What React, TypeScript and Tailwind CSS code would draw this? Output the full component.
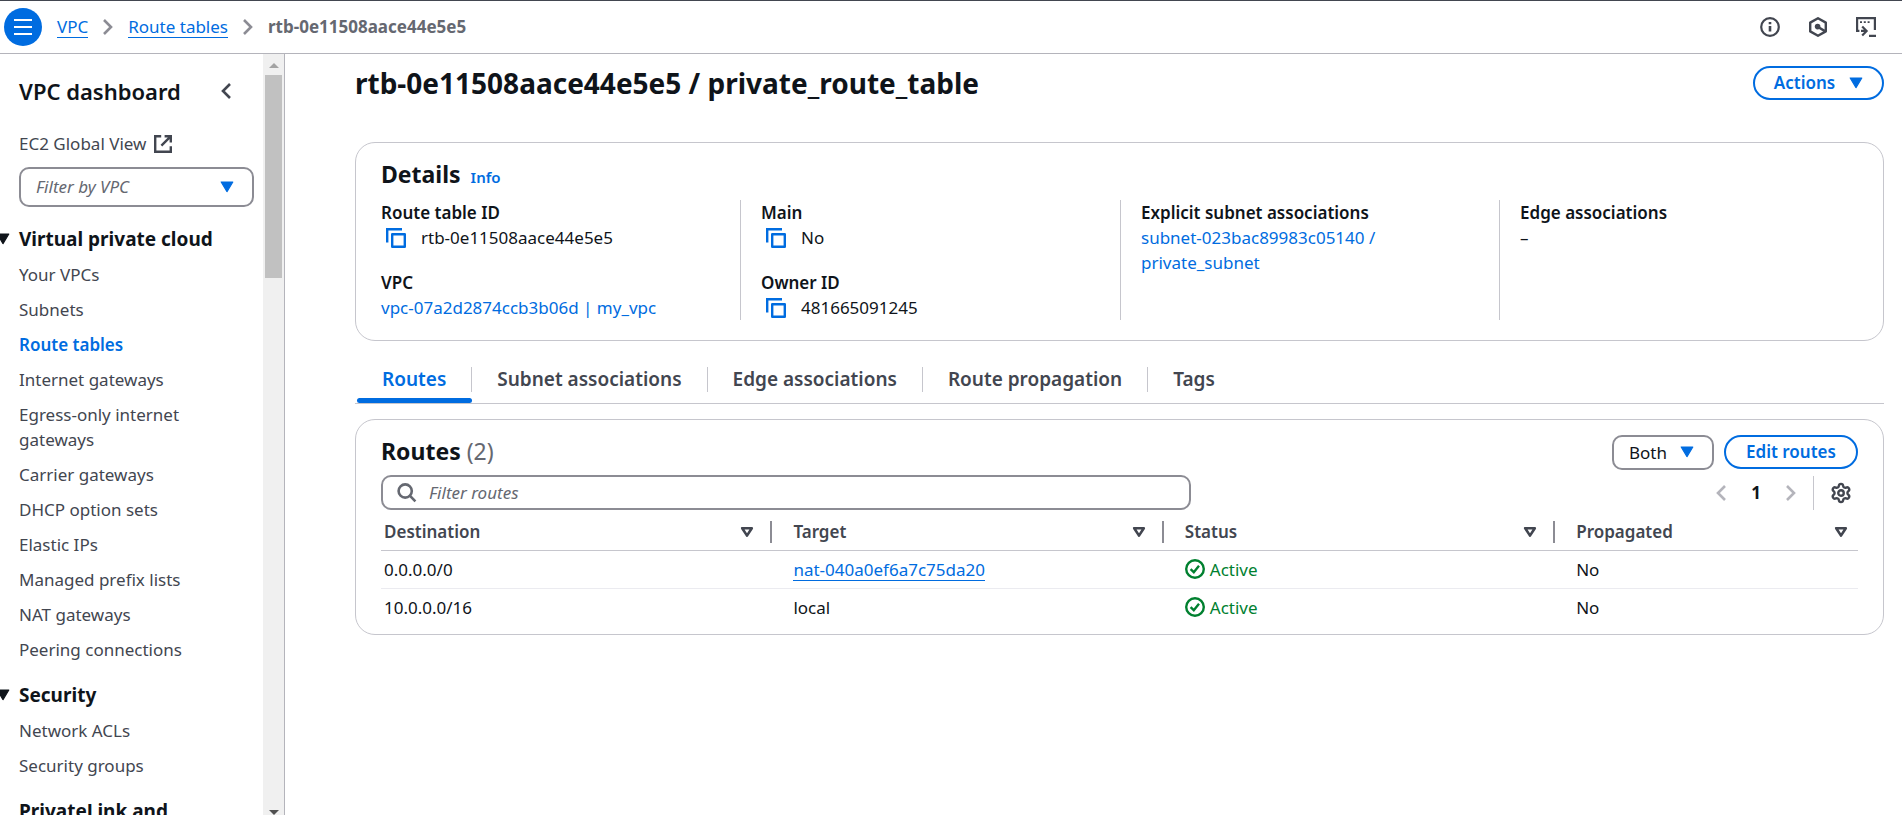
import React from "react";
import { Settings } from "lucide-react";

type IconProps = { className?: string };

function Caret({ className = "" }: IconProps) {
  return (
    <svg viewBox="0 0 14 12" className={className} aria-hidden="true">
      <path d="M1.2 1h11.6L7 10.6z" fill="currentColor" stroke="currentColor" strokeWidth="1.2" strokeLinejoin="round" />
    </svg>
  );
}

function SortCaret() {
  return (
    <svg viewBox="0 0 14 12" className="h-3 w-3.5" aria-hidden="true">
      <path d="M2.2 2.2h9.6L7 9.6z" fill="none" stroke="currentColor" strokeWidth="2.6" strokeLinejoin="round" />
    </svg>
  );
}

function Chevron({ className = "", left = false }: IconProps & { left?: boolean }) {
  return (
    <svg viewBox="0 0 12 18" className={className} aria-hidden="true">
      <path d={left ? "M10 2 3 9l7 7" : "M2 2l7 7-7 7"} fill="none" stroke="currentColor" strokeWidth="2.6" />
    </svg>
  );
}

function ExternalIcon() {
  return (
    <svg viewBox="0 0 18 18" className="size-[18px]" fill="none" stroke="currentColor" strokeWidth="2.4" aria-hidden="true">
      <path d="M7.2 1.2h-6v15.6h15.6v-5.6M10.6 1.2h6.2v6.2M16.4 1.6 7.4 10.6" />
    </svg>
  );
}

function CopyIcon() {
  return (
    <svg viewBox="0 0 20 20" className="size-5" fill="none" stroke="currentColor" strokeWidth="2.4" aria-hidden="true">
      <path d="M1.2 14.6V1.2H16" />
      <path d="M6.2 6.2h12.6v12.6H6.2z" strokeLinejoin="round" />
    </svg>
  );
}

function InfoIcon() {
  return (
    <svg viewBox="0 0 20 20" className="size-5" fill="none" stroke="currentColor" strokeWidth="2.2" aria-hidden="true">
      <circle cx="10" cy="10" r="8.8" />
      <path d="M10 9v5.6M10 5v2.2" strokeWidth="2.6" />
    </svg>
  );
}

function HexagonIcon() {
  return (
    <svg viewBox="0 0 20 20" className="size-5" fill="none" stroke="currentColor" strokeWidth="2.4" strokeLinejoin="round" aria-hidden="true">
      <path d="M10 1.2 17.8 5.6v8.8L10 18.8 2.2 14.4V5.6z" />
      <circle cx="9.6" cy="9.6" r="2.8" fill="currentColor" stroke="none" />
      <path d="M10 10l7.4 4.4" strokeWidth="2.4" />
    </svg>
  );
}

function ShellIcon() {
  return (
    <svg viewBox="0 0 20 20" className="size-5" fill="none" stroke="currentColor" strokeWidth="2.2" aria-hidden="true">
      <path d="M3.4 13.9H1.1V1.1h17.8V13" />
      <path d="M4 5.2h2M7.8 5.2h2M11.6 5.2h2" strokeWidth="1.8" />
      <path d="M5 13.9h5.4M6.2 9.4l4.4 4.5-4.4 4.5M13 18.9h7" />
    </svg>
  );
}

function SearchIcon() {
  return (
    <svg viewBox="0 0 20 20" className="size-5 shrink-0 text-[#656871]" fill="none" stroke="currentColor" strokeWidth="2.6" aria-hidden="true">
      <circle cx="8.2" cy="8" r="6.6" />
      <path d="M12.8 12.6 18.4 18.4" />
    </svg>
  );
}

function CheckIcon() {
  return (
    <svg viewBox="0 0 20 20" className="size-5 shrink-0" fill="none" stroke="currentColor" strokeWidth="2.4" aria-hidden="true">
      <circle cx="10" cy="10" r="8.8" />
      <path d="M5.6 10.2 8.8 13.2 14 6.8" />
    </svg>
  );
}

const sections: { title: string; items: string[] }[] = [
  {
    title: "Virtual private cloud",
    items: [
      "Your VPCs",
      "Subnets",
      "Route tables",
      "Internet gateways",
      "Egress-only internet gateways",
      "Carrier gateways",
      "DHCP option sets",
      "Elastic IPs",
      "Managed prefix lists",
      "NAT gateways",
      "Peering connections",
    ],
  },
  { title: "Security", items: ["Network ACLs", "Security groups"] },
  { title: "PrivateLink and Lattice", items: [] },
];

function Header() {
  return (
    <header className="flex h-[54px] shrink-0 items-center border-t border-b border-t-[#424650] border-b-[#b4b4bb] pr-[26px] pl-1">
      <button
        type="button"
        aria-label="Open navigation"
        className="flex size-[38px] items-center justify-center rounded-full bg-[#006ce0] text-white"
      >
        <svg viewBox="0 0 18 16" className="h-4 w-[18px]" stroke="currentColor" strokeWidth="2" aria-hidden="true">
          <path d="M0 1h18M0 8h18M0 15h18" />
        </svg>
      </button>
      <nav aria-label="Breadcrumb" className="ml-[15px] flex items-center gap-[14px] text-[17px] leading-5">
        <a href="#vpc" className="border-b border-[#006ce0] text-[#006ce0]">VPC</a>
        <Chevron className="h-[18px] w-3 text-[#8c8c94]" />
        <a href="#route-tables" className="border-b border-[#006ce0] text-[#006ce0]">Route tables</a>
        <Chevron className="h-[18px] w-3 text-[#8c8c94]" />
        <span className="font-bold text-[#656871]">rtb-0e11508aace44e5e5</span>
      </nav>
      <div className="ml-auto flex gap-7 text-[#424650]">
        <button type="button" aria-label="Info"><InfoIcon /></button>
        <button type="button" aria-label="Assistant"><HexagonIcon /></button>
        <button type="button" aria-label="CloudShell"><ShellIcon /></button>
      </div>
    </header>
  );
}

function Sidebar() {
  return (
    <aside className="flex w-[285px] shrink-0 border-r border-[#b4b4bb]">
      <div className="min-w-0 flex-1 overflow-hidden pr-[9px] pl-[19px]">
        <div className="flex items-center justify-between pt-[23px] pr-[22px]">
          <h2 className="text-[22px] leading-7 font-semibold">VPC dashboard</h2>
          <button type="button" aria-label="Close navigation" className="text-[#424650]">
            <Chevron left className="h-[18px] w-3" />
          </button>
        </div>
        <a href="#global" className="mt-[26px] flex items-center gap-2 text-[17px] leading-[25px] text-[#424650]">
          EC2 Global View <ExternalIcon />
        </a>
        <div className="relative mt-[11px]">
          <select
            aria-label="Filter by VPC"
            className="h-10 w-full appearance-none rounded-[10px] border-2 border-[#8c8c94] bg-white px-[15px] text-[17px] text-[#656871] italic"
          >
            <option>Filter by VPC</option>
          </select>
          <Caret className="pointer-events-none absolute top-3.5 right-5 h-3 w-3.5 text-[#006ce0]" />
        </div>
        {sections.map((section) => (
          <section key={section.title} className="pt-5">
            <button type="button" className="-ml-[23px] flex items-center gap-[9px] text-left text-[19px] leading-6 font-bold">
              <Caret className="h-3 w-3.5 shrink-0" />
              <span className="w-[210px]">{section.title}</span>
            </button>
            <ul className="mt-[11px] space-y-2.5 pb-px">
              {section.items.map((item) => (
                <li key={item} className="pr-10 text-[17px] leading-[25px]">
                  <a
                    href="#item"
                    className={item === "Route tables" ? "font-semibold text-[#006ce0]" : "text-[#424650]"}
                  >
                    {item}
                  </a>
                </li>
              ))}
            </ul>
          </section>
        ))}
      </div>
      <div className="flex w-[21px] shrink-0 flex-col items-center justify-between bg-[#f0f0f0]" aria-hidden="true">
        <div className="flex w-full flex-col items-center">
          <svg viewBox="0 0 10 5" className="mt-[9px] mb-[7px] h-[5px] w-2.5 fill-[#a3a3a3]">
            <path d="M5 0l5 5H0z" />
          </svg>
          <div className="h-[203px] w-[17px] bg-[#c1c1c1]" />
        </div>
        <svg viewBox="0 0 10 5" className="h-[5px] w-2.5 fill-[#505050]">
          <path d="M0 0h10L5 5z" />
        </svg>
      </div>
    </aside>
  );
}

function Field({ label, copy = false, children }: { label: string; copy?: boolean; children: React.ReactNode }) {
  return (
    <div>
      <dt className="font-semibold">{label}</dt>
      <dd className="flex items-center">
        {copy && (
          <button type="button" aria-label={`Copy ${label}`} className="mr-[15px] ml-[5px] text-[#006ce0]">
            <CopyIcon />
          </button>
        )}
        {children}
      </dd>
    </div>
  );
}

function Details() {
  return (
    <section className="mt-[42px] rounded-[20px] border border-[#c6c6cd] px-[25px] pt-4 pb-5">
      <div className="flex items-baseline gap-[10px]">
        <h2 className="text-[23px] leading-[30px] font-bold">Details</h2>
        <a href="#info" className="text-[15px] font-semibold text-[#006ce0]">Info</a>
      </div>
      <dl className="mt-[11px] grid grid-cols-[360fr_380fr_379fr_358fr] divide-x divide-[#c6c6cd] text-[17px] leading-[25px]">
        <div className="space-y-5">
          <Field label="Route table ID" copy>rtb-0e11508aace44e5e5</Field>
          <Field label="VPC">
            <a href="#my-vpc" className="text-[#006ce0]">vpc-07a2d2874ccb3b06d | my_vpc</a>
          </Field>
        </div>
        <div className="space-y-5 pl-5">
          <Field label="Main" copy>No</Field>
          <Field label="Owner ID" copy>481665091245</Field>
        </div>
        <div className="pl-5">
          <Field label="Explicit subnet associations">
            <a href="#subnet" className="w-[270px] text-[#006ce0]">subnet-023bac89983c05140 / private_subnet</a>
          </Field>
        </div>
        <div className="pl-5">
          <Field label="Edge associations">–</Field>
        </div>
      </dl>
    </section>
  );
}

const tabs = ["Routes", "Subnet associations", "Edge associations", "Route propagation", "Tags"];

function Tabs() {
  return (
    <div role="tablist" className="mt-[23px] flex border-b border-[#c6c6cd] pl-0.5">
      {tabs.map((tab, i) => (
        <button
          key={tab}
          type="button"
          role="tab"
          aria-selected={i === 0}
          className={
            i === 0
              ? "flex flex-col text-[19px] leading-[25px] font-semibold text-[#006ce0]"
              : "flex flex-col text-[19px] leading-[25px] font-semibold text-[#424650]"
          }
        >
          <span
            className={
              i === tabs.length - 1
                ? "mt-[3px] mb-1.5 px-[25px]"
                : "mt-[3px] mb-1.5 border-r border-[#c6c6cd] px-[25px]"
            }
          >
            {tab}
          </span>
          {i === 0 && <span className="h-[5px] w-full rounded-full bg-[#006ce0]" />}
        </button>
      ))}
    </div>
  );
}

const columns = [
  { name: "Destination", width: "w-[26.5%]" },
  { name: "Target", width: "w-[26.5%]" },
  { name: "Status", width: "w-[26.5%]" },
  { name: "Propagated", width: "w-[20.5%]" },
];

const routes = [
  { destination: "0.0.0.0/0", target: "nat-040a0ef6a7c75da20", link: true },
  { destination: "10.0.0.0/16", target: "local", link: false },
];

function Routes() {
  return (
    <section className="mt-[15px] rounded-[20px] border border-[#c6c6cd] px-[25px] pt-[15px] pb-2">
      <div className="flex items-start justify-between">
        <h2 className="pt-px text-[23px] leading-[30px] font-bold">
          Routes <span className="font-normal text-[#656871]">(2)</span>
        </h2>
        <div className="flex items-start gap-[10px]">
          <div className="relative">
            <select
              aria-label="Route filter"
              className="h-[35px] w-[102px] appearance-none rounded-[10px] border-2 border-[#8c8c94] bg-white pl-[15px] text-[17px]"
            >
              <option>Both</option>
            </select>
            <Caret className="pointer-events-none absolute top-[11px] right-5 h-3 w-3.5 text-[#006ce0]" />
          </div>
          <button
            type="button"
            className="h-[34px] w-[134px] rounded-full border-2 border-[#006ce0] text-[17px] leading-5 font-semibold text-[#006ce0]"
          >
            Edit routes
          </button>
        </div>
      </div>
      <div className="mt-[5px] flex items-center justify-between">
        <label className="flex h-[35px] w-[810px] max-w-[60%] items-center gap-3 rounded-[10px] border-2 border-[#8c8c94] px-3.5">
          <SearchIcon />
          <input
            type="text"
            aria-label="Filter routes"
            placeholder="Filter routes"
            className="w-full text-[17px] leading-6 italic outline-none placeholder:text-[#656871]"
          />
        </label>
        <div className="flex items-center text-[#b4b4bb]">
          <button type="button" aria-label="Previous page"><Chevron left className="h-[18px] w-3" /></button>
          <span className="w-[58px] text-center text-[17px] leading-6 font-bold text-[#0f141a]">1</span>
          <button type="button" aria-label="Next page"><Chevron className="h-[18px] w-3" /></button>
          <span className="mr-4 ml-4 h-[34px] w-px bg-[#c6c6cd]" />
          <button type="button" aria-label="Preferences" className="mr-1.5 text-[#424650]">
            <Settings size={22} strokeWidth={2.6} />
          </button>
        </div>
      </div>
      <table className="w-full table-fixed text-left text-[17px] leading-[25px]">
        <thead>
          <tr className="border-b border-[#c6c6cd] text-[#424650]">
            {columns.map((c, i) => (
              <th key={c.name} className={`${c.width} h-10 p-0 pt-1 font-semibold`}>
                <div
                  className={
                    i === columns.length - 1
                      ? "flex h-[22px] items-center justify-between pr-2.5 pl-[21px]"
                      : i === 0
                        ? "flex h-[22px] items-center justify-between border-r-2 border-[#8c8c94] pr-4 pl-[3px]"
                        : "flex h-[22px] items-center justify-between border-r-2 border-[#8c8c94] pr-4 pl-[21px]"
                  }
                >
                  {c.name}
                  <SortCaret />
                </div>
              </th>
            ))}
          </tr>
        </thead>
        <tbody>
          {routes.map((r) => (
            <tr key={r.destination} className="border-b border-[#ebebf0] last:border-b-0">
              <td className="h-[38px] p-0 pl-[3px]">{r.destination}</td>
              <td className="p-0 pl-[21px]">
                {r.link ? (
                  <a href="#nat" className="inline-block border-b border-[#006ce0] leading-5 text-[#006ce0]">{r.target}</a>
                ) : (
                  r.target
                )}
              </td>
              <td className="p-0 pl-[21px]">
                <span className="flex items-center gap-[5px] text-[#00802f]">
                  <CheckIcon />
                  Active
                </span>
              </td>
              <td className="p-0 pl-[21px]">No</td>
            </tr>
          ))}
        </tbody>
      </table>
    </section>
  );
}

export default function App() {
  return (
    <div className="flex h-screen flex-col overflow-hidden bg-white font-['Noto_Sans','Open_Sans',sans-serif] text-[#0f141a]">
      <Header />
      <div className="flex min-h-0 flex-1">
        <Sidebar />
        <main className="min-w-0 flex-1 overflow-hidden pr-[18px] pl-[70px]">
          <div className="flex items-center justify-between pt-3">
            <h1 className="text-[28px] leading-8 font-bold">rtb-0e11508aace44e5e5 / private_route_table</h1>
            <button
              type="button"
              className="flex h-[34px] w-[131px] items-center justify-center gap-3.5 rounded-full border-2 border-[#006ce0] text-[17px] leading-5 font-semibold text-[#006ce0]"
            >
              Actions <Caret className="h-3 w-3.5" />
            </button>
          </div>
          <Details />
          <Tabs />
          <Routes />
        </main>
      </div>
    </div>
  );
}
